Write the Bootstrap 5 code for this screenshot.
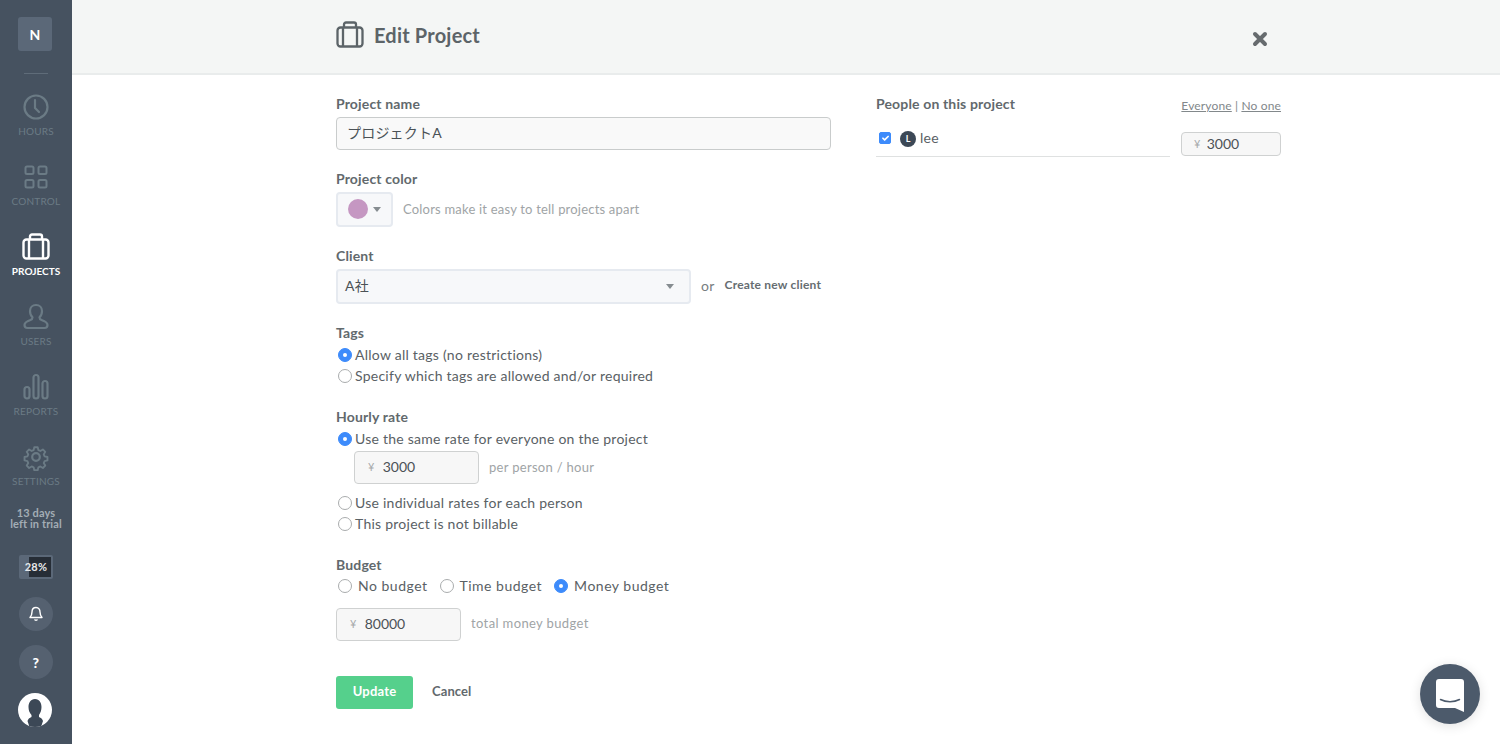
<!DOCTYPE html>
<html lang="en"><head><meta charset="utf-8"><title>Edit Project</title>
<link href="https://cdn.jsdelivr.net/npm/bootstrap@5.3.0/dist/css/bootstrap.min.css" rel="stylesheet">
<style>
html,body{height:744px;overflow:hidden}
body{font-family:Lato,"Noto Sans CJK JP",sans-serif;font-size:14px;color:#5a6165;letter-spacing:.25px;background:#fff}
.shell{height:744px}
.rail{width:72px;flex:none;background:#465260;color:#6b7b85}
.brand{width:34px;height:34px;margin-top:17px;margin-left:-2px;background:#5b6878;border-radius:3px;color:#fff;font-weight:700;font-size:14px}
.rail-rule{width:24px;height:1px;background:#5f6c79;margin-top:22px;margin-bottom:14px}
.rail-item{height:70px;width:72px;padding-top:5px;color:#6b7b85}
.rail-item svg{width:28px;height:28px;display:block}
.rail-item span{font-size:10px;line-height:12px;margin-top:4px;letter-spacing:.2px}
.rail-item.on{color:#fff}
.rail-item.on span{font-weight:700;letter-spacing:0}
.trial{font-size:11px;line-height:11px;color:#a3adb5;font-weight:700;text-align:center;margin-top:-1px;letter-spacing:.1px}
.meter{width:34px;height:24px;margin-top:26px;background:#5b6878;border-radius:2px;padding:2px 2px 2px 10px}
.meter-fill{display:block;width:100%;height:100%;background:#262d36}
.meter-txt{font-size:11px;font-weight:700;color:#e6e8ea;letter-spacing:.3px}
.rail-round{width:34px;height:34px;border-radius:50%;background:#556170;color:#fff;font-weight:900;font-size:14px;margin-top:14px}
.first-round{margin-top:18px}
.me{width:34px;height:34px;border-radius:50%;background:#fff;margin-top:14px;overflow:hidden;margin-left:-2px}
.head{height:75px;flex:none;background:#f4f6f5;border-bottom:2px solid #e9ecec;padding:0 232px 4px 264px;color:#5c6468}
.head h1{font-size:20px;font-weight:700;margin:0 0 0 10px;letter-spacing:.2px;color:#5c6468}
.close-x{font-size:0;margin-top:8px}
.sheet{padding:19px 219px 0 264px}
.left{width:495px;flex:none}
.right{margin-left:45px;width:405px;flex:none}
.lab{font-weight:700;line-height:20px;margin:0;display:block;color:#62696d;letter-spacing:.15px}
.lab-gap{margin-bottom:1px}
.grp{margin-bottom:19px}
.grp-wide{margin-bottom:21px}
.name-in.form-control{height:33px;margin-top:3px;background:#f9f9f9;border:1px solid #c9cccc;border-radius:4px;padding:0 10px 4px;font-size:14px;color:#4b5256;box-shadow:none;letter-spacing:.2px}
.swatch{width:57px;height:35px;margin-top:3px;background:#f7f8fa;border:2px solid #e6eaf0;border-radius:4px;padding-left:10px}
.dot{width:20px;height:20px;border-radius:50%;background:#c597c2;margin-top:-2px}
.caret-d{width:0;height:0;border:4.5px solid transparent;border-top:5px solid #868c90;border-bottom:0;margin-left:5px}
.hint{color:#a0a4a6;font-size:13px;letter-spacing:.3px;margin-left:10px}
.hint-color{margin-top:4px;letter-spacing:.2px}
.hint-rate{margin:0 0 6px}
.hint-bud{margin:10px 0 0;letter-spacing:.37px}
.cli-sel{width:355px;height:35px;margin-top:3px;background:#f7f8fa;border:2px solid #e6eaf0;border-radius:4px;padding:0 15px 0 7px;color:#4b5256}
.cli-name{margin-bottom:2px}
.or-t{margin-left:10px;color:#777d81}
.new-c{font-size:12px;font-weight:700;margin-left:10px;color:#666d71;letter-spacing:.2px}
.opt{line-height:21px;height:21px;color:#5a6165}
.opt .form-check-input{width:14px;height:14px;margin:0 3px 0 2px;flex:none;border:1px solid #a9acad;background-color:#fff}
.opt .form-check-input:checked{background-color:#3d8bfb;border-color:#3d8bfb;background-size:8px}
.money{height:33px;background:#f7f7f7;border:1px solid #cfd1d1;border-radius:4px}
.money i{font-style:normal;font-size:11px;color:#a5a8aa}
.money input{border:0;outline:0;background:transparent;padding:0 0 2px;min-width:0;width:60px;color:#4b5256;font:inherit;letter-spacing:0}
.m-rate{width:125px;margin:2px 10px 8px 18px;padding-left:13px}
.m-rate input{margin-left:8px}
.m-bud{width:125px;margin:12px 10px 0 0;padding-left:13px}
.m-bud input{margin-left:8px}
.m-per{width:100px;height:24px;padding-left:12px;border-radius:4px;margin-left:11px;margin-top:14px}
.m-per input{margin-left:6px;width:50px}
.gap-opt{gap:10px;letter-spacing:.5px}
.gap-opt .form-check-input{margin-right:6px}
.go{width:77px;height:33px;background:#55d08c;border:0;border-radius:3px;color:#fff;font-weight:700;font-size:13px;padding:0 0 2px;letter-spacing:.2px}
.go:hover{background:#55d08c;color:#fff}
.no-go{color:#62696d;font-size:13px;font-weight:700;margin:0 0 2px 19px;text-decoration:none;letter-spacing:.1px}
.acts{margin-top:35px}
.peo-links{font-size:12px;color:#82888b;letter-spacing:.15px;line-height:24px;width:100px;margin-left:11px;text-align:right;white-space:nowrap}
.peo-links a{color:#82888b}
.peo-col{width:294px;flex:none}
.peo-row{height:40px;border-bottom:1px solid #dfe1e1;margin-top:3px;padding:15px 0 0 3px}
.peo-row .form-check-input{width:12px;height:12px;margin:0;border-radius:2px;background-color:#3d8bfb;border-color:#3d8bfb;background-size:11px}
.ava{width:16px;height:16px;border-radius:50%;background:#3c4856;color:#fff;font-size:9px;font-weight:700;margin-left:9px;margin-top:-1px;letter-spacing:0}
.p-name{margin-left:4px;margin-top:-5px;color:#5a6165}
.chat{position:absolute;left:1420px;top:664px;width:60px;height:60px;border-radius:50%;background:#4c5a6b;box-shadow:0 2px 12px rgba(0,0,0,.12);padding-top:3px}
.chat svg{width:28px;height:33px}
</style></head>
<body>
<div class="shell d-flex">
<nav class="rail d-flex flex-column align-items-center">
  <div class="brand d-flex align-items-center justify-content-center">N</div>
  <div class="rail-rule"></div>
  <a class="rail-item d-flex flex-column align-items-center text-decoration-none" href="#"><svg viewBox="0 0 28 28" fill="none" stroke="currentColor" stroke-width="2.2" stroke-linecap="round" stroke-linejoin="round"><circle cx="14" cy="14" r="11.5"/><path d="M13 7v8l4 4"/></svg><span>HOURS</span></a>
  <a class="rail-item d-flex flex-column align-items-center text-decoration-none" href="#"><svg viewBox="0 0 28 28" fill="none" stroke="currentColor" stroke-width="2"><rect x="3.500" y="3.500" width="8" height="7.500" rx="1.500"/><rect x="16.500" y="3.500" width="8" height="7.500" rx="1.500"/><rect x="3.500" y="17" width="8" height="7.500" rx="1.500"/><rect x="16.500" y="17" width="8" height="7.500" rx="1.500"/></svg><span>CONTROL</span></a>
  <a class="rail-item on d-flex flex-column align-items-center text-decoration-none" href="#"><svg viewBox="0 0 28 28" fill="none" stroke="currentColor" stroke-width="2.4" stroke-linejoin="round"><rect x="1.500" y="6.500" width="25" height="19" rx="3"/><path d="M8 6.500v-3a2 2 0 0 1 2-2h8a2 2 0 0 1 2 2v3M7 6.500v19M21 6.500v19"/></svg><span>PROJECTS</span></a>
  <a class="rail-item d-flex flex-column align-items-center text-decoration-none" href="#"><svg viewBox="0 0 28 28" fill="none" stroke="currentColor" stroke-width="2.2" stroke-linejoin="round"><path d="M14 2c3.600 0 6 2.500 6 6 0 2.800-1 5-2.500 6.300 0 1.500.5 2.200 2 2.700 3 1 6 2 6 5 0 2-1.500 3-3 3H5.500c-1.500 0-3-1-3-3 0-3 3-4 6-5 1.500-.5 2-1.200 2-2.700C9 13 8 10.800 8 8c0-3.500 2.400-6 6-6z"/></svg><span>USERS</span></a>
  <a class="rail-item d-flex flex-column align-items-center text-decoration-none" href="#"><svg viewBox="0 0 28 28" fill="none" stroke="currentColor" stroke-width="2.2"><rect x="2.500" y="14" width="5" height="11.500" rx="2.500"/><rect x="11.500" y="2" width="5" height="23.500" rx="2.500"/><rect x="20.500" y="8" width="5" height="17.500" rx="2.500"/></svg><span>REPORTS</span></a>
  <a class="rail-item d-flex flex-column align-items-center text-decoration-none" href="#"><svg viewBox="0 0 28 28" fill="none" stroke="currentColor" stroke-width="2.2" stroke-linejoin="round"><circle cx="14" cy="14" r="3.800"/><path d="M12 2.500h4l.8 3.400 2.300 1 3-1.800 2.800 2.800-1.800 3 1 2.300 3.400.8v4l-3.400.8-1 2.300 1.800 3-2.800 2.800-3-1.800-2.300 1-.8 3.400h-4l-.8-3.400-2.300-1-3 1.800-2.800-2.800 1.800-3-1-2.300-3.400-.8v-4l3.400-.8 1-2.300-1.800-3L5.900 5.100l3 1.800 2.300-1z" transform="translate(2.100 2.100) scale(.85)"/></svg><span>SETTINGS</span></a>
  <div class="trial">13 days<br>left in trial</div>
  <div class="meter position-relative"><span class="meter-fill"></span><span class="meter-txt position-absolute top-50 start-50 translate-middle">28%</span></div>
  <div class="rail-round first-round d-flex align-items-center justify-content-center"><svg width="16" height="16" viewBox="0 0 16 16" fill="none" stroke="#fff" stroke-width="1.400" stroke-linejoin="round"><path d="M8 1.500c-2.800 0-4 2-4 4.500 0 2.500-.7 4-2 5.500h12c-1.300-1.500-2-3-2-5.500 0-2.500-1.200-4.500-4-4.500z"/><path d="M6.500 13.500c.5 1 2.500 1 3 0"/></svg></div>
  <div class="rail-round d-flex align-items-center justify-content-center">?</div>
  <div class="me"><svg width="34" height="34" viewBox="0 0 34 34"><path fill="#3c4856" d="M17 6c4.500 0 6.500 4 6.500 8 0 3-1 6-2.500 8v2c2 .8 3.500 2 4 4l-2 6H11.500l-2-6c.5-2 2-3.200 4-4v-2c-2-2-3-5-3-8 0-4 2-8 6.500-8z"/></svg></div>
</nav>
<main class="flex-grow-1 d-flex flex-column">
  <header class="head d-flex align-items-center justify-content-between">
    <div class="d-flex align-items-center"><svg width="28" height="28" viewBox="0 0 28 28" fill="none" stroke="#5c6468" stroke-width="2.300" stroke-linejoin="round"><rect x="1.500" y="6.500" width="25" height="19" rx="3"/><path d="M8 6.500v-3a2 2 0 0 1 2-2h8a2 2 0 0 1 2 2v3M7 6.500v19M21 6.500v19"/></svg><h1>Edit Project</h1></div>
    <div class="close-x"><svg width="16" height="16" viewBox="0 0 16 16"><path d="M3 3l10 10M13 3L3 13" stroke="#666b6e" stroke-width="4" stroke-linecap="round"/></svg></div>
  </header>
  <div class="sheet d-flex">
    <form class="left">
      <div class="grp"><label class="lab">Project name</label><input class="form-control name-in" value="プロジェクトA"></div>
      <div class="grp"><label class="lab">Project color</label>
        <div class="d-flex align-items-center"><div class="swatch d-flex align-items-center"><span class="dot"></span><span class="caret-d"></span></div><span class="hint hint-color">Colors make it easy to tell projects apart</span></div></div>
      <div class="grp"><label class="lab">Client</label>
        <div class="d-flex align-items-center"><div class="cli-sel d-flex align-items-center justify-content-between"><span class="cli-name">A社</span><span class="caret-d"></span></div><span class="or-t">or</span><span class="new-c">Create new client</span></div></div>
      <div class="grp-wide"><label class="lab lab-gap">Tags</label>
        <div class="opt d-flex align-items-center"><input class="form-check-input" type="radio" name="t" checked><span>Allow all tags (no restrictions)</span></div>
        <div class="opt d-flex align-items-center"><input class="form-check-input" type="radio" name="t"><span>Specify which tags are allowed and/or required</span></div></div>
      <div class="grp-wide"><label class="lab lab-gap">Hourly rate</label>
        <div class="opt d-flex align-items-center"><input class="form-check-input" type="radio" name="r" checked><span>Use the same rate for everyone on the project</span></div>
        <div class="d-flex align-items-center"><div class="money m-rate d-flex align-items-center"><i>¥</i><input value="3000"></div><span class="hint hint-rate">per person / hour</span></div>
        <div class="opt d-flex align-items-center"><input class="form-check-input" type="radio" name="r"><span>Use individual rates for each person</span></div>
        <div class="opt d-flex align-items-center"><input class="form-check-input" type="radio" name="r"><span>This project is not billable</span></div></div>
      <div><label class="lab">Budget</label>
        <div class="opt gap-opt d-flex align-items-center"><span class="d-flex align-items-center"><input class="form-check-input" type="radio" name="b"><span>No budget</span></span><span class="d-flex align-items-center"><input class="form-check-input" type="radio" name="b"><span>Time budget</span></span><span class="d-flex align-items-center"><input class="form-check-input" type="radio" name="b" checked><span>Money budget</span></span></div>
        <div class="d-flex align-items-center"><div class="money m-bud d-flex align-items-center"><i>¥</i><input value="80000"></div><span class="hint hint-bud">total money budget</span></div></div>
      <div class="acts d-flex align-items-center"><button type="button" class="btn go">Update</button><a class="no-go" href="#">Cancel</a></div>
    </form>
    <section class="right d-flex">
      <div class="peo-col"><div class="lab">People on this project</div>
        <div class="peo-row d-flex align-items-start"><input class="form-check-input" type="checkbox" checked><span class="ava d-flex align-items-center justify-content-center">L</span><span class="p-name">lee</span></div></div>
      <div><div class="peo-links"><a href="#">Everyone</a> | <a href="#">No one</a></div>
        <div class="money m-per d-flex align-items-center"><i>¥</i><input value="3000"></div></div>
    </section>
  </div>
</main>
</div>
<div class="chat d-flex align-items-center justify-content-center"><svg viewBox="0 0 28 33"><path fill="#fff" d="M3 0h22a3 3 0 0 1 3 3v30l-9-4H3a3 3 0 0 1-3-3V3a3 3 0 0 1 3-3z"/><path d="M4.500 20.500c5.500 3 13.500 3 19 0" fill="none" stroke="#4c5a6b" stroke-width="1.500" stroke-linecap="round"/></svg></div>
<script src="https://cdn.jsdelivr.net/npm/bootstrap@5.3.0/dist/js/bootstrap.bundle.min.js"></script>
</body></html>
